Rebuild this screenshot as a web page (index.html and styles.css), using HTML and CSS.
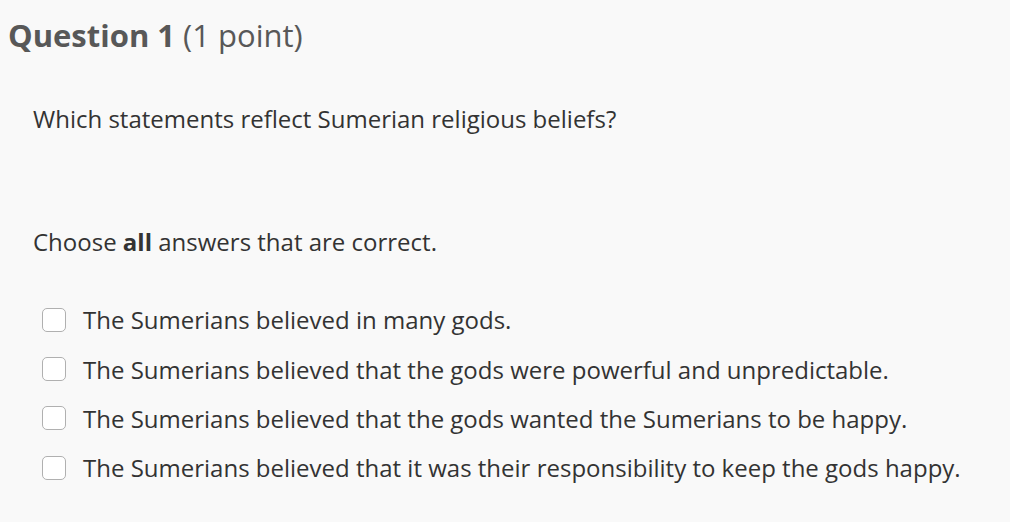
FILE: index.html
```html
<!DOCTYPE html>
<html>
<head>
<meta charset="utf-8">
<link rel="stylesheet" href="styles.css">
</head>
<body>
<div class="question">
  <h1 class="title"><span class="num">Question 1</span> (1 point)</h1>
  <p class="prompt">Which statements reflect Sumerian religious beliefs?</p>
  <p class="instr">Choose <b>all</b> answers that are correct.</p>
  <ul class="answers">
    <li><span class="box"></span><span>The Sumerians believed in many gods.</span></li>
    <li><span class="box"></span><span>The Sumerians believed that the gods were powerful and unpredictable.</span></li>
    <li><span class="box"></span><span>The Sumerians believed that the gods wanted the Sumerians to be happy.</span></li>
    <li><span class="box"></span><span>The Sumerians believed that it was their responsibility to keep the gods happy.</span></li>
  </ul>
</div>
</body>
</html>
```
FILE: styles.css
```css
html, body {
  margin: 0;
  padding: 0;
  background: #f9f9f9;
}
body {
  font-family: "Open Sans", Lato, sans-serif;
  color: #333;
}
.question {
  padding: 11px 0 0 8px;
}
.title {
  margin: 0;
  font-size: 31px;
  font-weight: 400;
  color: #585858;
  line-height: 48px;
}
.title .num {
  font-weight: 700;
}
.prompt {
  margin: 45px 0 0 25px;
  font-size: 24px;
  line-height: 30px;
}
.instr {
  margin: 93px 0 0 25px;
  font-size: 24px;
  line-height: 30px;
}
.answers {
  list-style: none;
  margin: 38px 0 0 34px;
  padding: 0;
}
.answers li {
  display: flex;
  align-items: center;
  gap: 17px;
  height: 49.4px;
  font-size: 24px;
}
.box {
  width: 22px;
  height: 22px;
  border: 1px solid #b0b0b0;
  border-radius: 5px;
  background: #fff;
  flex: none;
}
```
